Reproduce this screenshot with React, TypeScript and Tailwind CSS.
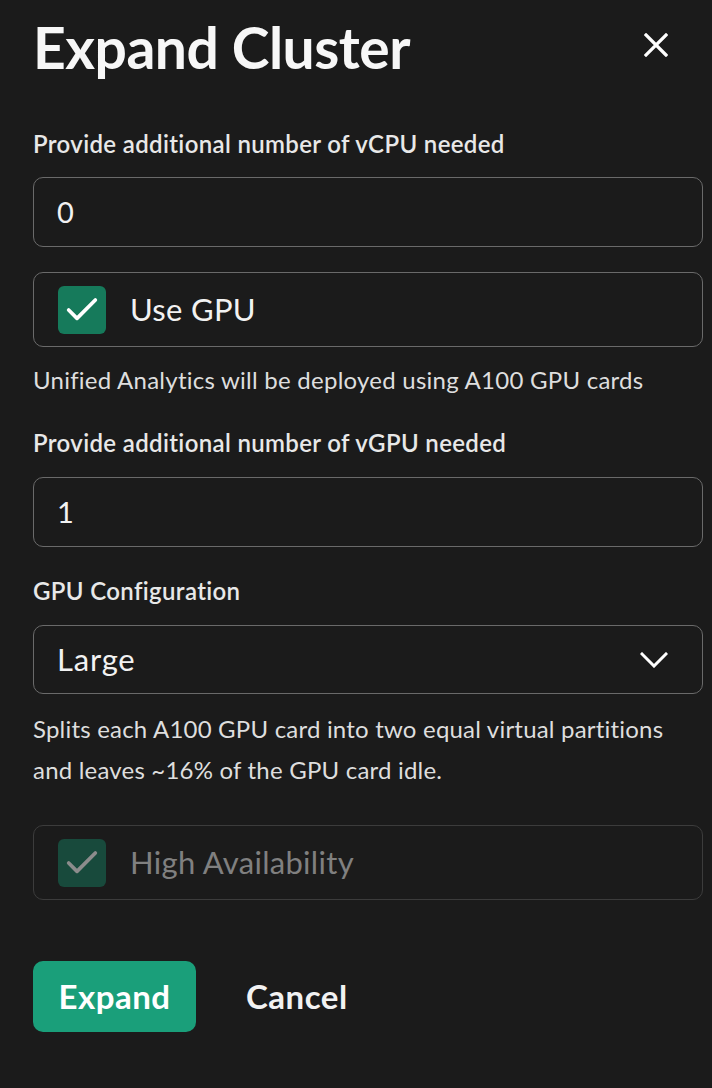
import { Check } from "lucide-react";

function Field({ value }: { value: string }) {
  return (
    <div className="h-[70px] rounded-[10px] border-[1.5px] border-[#6a6a6a] flex items-center px-[23px] text-[29px] text-[#f2f2f2]">
      {value}
    </div>
  );
}

function CheckRow({ label, disabled }: { label: string; disabled?: boolean }) {
  return (
    <div
      className={`h-[75px] rounded-[10px] border-[1.5px] flex items-center px-[24px] gap-[24px] ${
        disabled ? "border-[#3c3c3c]" : "border-[#6a6a6a]"
      }`}
    >
      <div
        className={`w-[48px] h-[48px] rounded-[6px] flex items-center justify-center ${
          disabled ? "bg-[#184a3c]" : "bg-[#167a5b]"
        }`}
      >
        <Check className={`w-[40px] h-[40px] ${disabled ? "text-[#8c8c8c]" : "text-white"}`} strokeWidth={2.2} />
      </div>
      <span className={`text-[31px] tracking-[0.3px] ${disabled ? "text-[#808080]" : "text-[#f2f2f2]"}`}>{label}</span>
    </div>
  );
}

export default function App() {
  return (
    <div className="min-h-screen bg-[#1b1b1b] pl-[33px] pr-[9px] font-['Lato',sans-serif]">
      {/* Header */}
      <div className="h-[96px] flex items-center justify-between">
        <h1 className="text-[57px] font-bold text-[#f7f7f7] tracking-[-0.5px] leading-none mb-[2px]">Expand Cluster</h1>
        <svg className="mr-[35px] mb-[6px]" width="24" height="24" viewBox="0 0 24 24" fill="none" stroke="white" strokeWidth="3.2" strokeLinecap="square">
          <path d="M2 2 22 22M22 2 2 22" />
        </svg>
      </div>

      <div className="flex flex-col">
        <label className="mt-[36px] h-[24px] leading-[24px] text-[24px] font-semibold tracking-[0.35px] text-[#e8e8e8]">
          Provide additional number of vCPU needed
        </label>
        <div className="mt-[21px]">
          <Field value="0" />
        </div>

        <div className="mt-[25px]">
          <CheckRow label="Use GPU" />
        </div>
        <p className="mt-[21px] h-[24px] leading-[24px] text-[24px] tracking-[0.25px] text-[#dedede]">
          Unified Analytics will be deployed using A100 GPU cards
        </p>

        <label className="mt-[39px] h-[24px] leading-[24px] text-[24px] font-semibold tracking-[0.35px] text-[#e8e8e8]">
          Provide additional number of vGPU needed
        </label>
        <div className="mt-[22px]">
          <Field value="1" />
        </div>

        <label className="mt-[32px] h-[24px] leading-[24px] text-[24px] font-semibold tracking-[0.35px] text-[#e8e8e8]">
          GPU Configuration
        </label>
        <div className="mt-[22px] h-[69px] rounded-[10px] border-[1.5px] border-[#6a6a6a] flex items-center justify-between pl-[23px] pr-[34px]">
          <span className="text-[31px] tracking-[0.8px] text-[#f2f2f2]">Large</span>
          <svg width="28" height="16" viewBox="0 0 28 16" fill="none" stroke="white" strokeWidth="3" strokeLinecap="square">
            <path d="M2 2 14 14 26 2" />
          </svg>
        </div>
        <p className="mt-[14px] leading-[41px] text-[24px] tracking-[0.2px] text-[#dedede]">
          Splits each A100 GPU card into two equal virtual partitions
          <br />
          and leaves ~16% of the GPU card idle.
        </p>

        <div className="mt-[35px]">
          <CheckRow label="High Availability" disabled />
        </div>

        <div className="mt-[61px] flex items-center gap-[50px]">
          <button className="w-[163px] h-[71px] flex items-center justify-center rounded-[10px] bg-[#1a9f7a] text-white text-[33px] font-bold tracking-[0.5px]">
            Expand
          </button>
          <button className="text-[33px] font-bold tracking-[0.5px] text-[#f2f2f2]">Cancel</button>
        </div>
      </div>
    </div>
  );
}
